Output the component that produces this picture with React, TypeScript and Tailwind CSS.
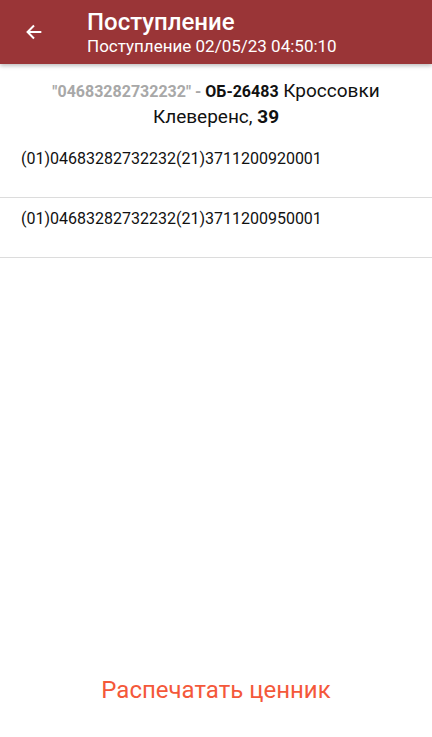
export default function App() {
  const codes = [
    "(01)04683282732232(21)3711200920001",
    "(01)04683282732232(21)3711200950001",
  ];

  return (
    <div className="flex h-[737px] w-[432px] flex-col bg-white font-['Roboto',sans-serif]">
      {/* шапка */}
      <header className="flex h-16 shrink-0 items-center bg-[#9a3537] shadow-[0_2px_4px_rgba(0,0,0,0.25)]">
        <button className="ml-[22px] flex h-6 w-6 items-center justify-center text-white">
          <svg width="22" height="22" viewBox="0 0 24 24" fill="none">
            <path d="M20 12H5M12 5l-7 7 7 7" stroke="currentColor" strokeWidth="2.2" />
          </svg>
        </button>
        <div className="ml-[41px] flex flex-col text-white">
          <span className="text-[24px] font-medium leading-[28px]">Поступление</span>
          <span className="text-[17px] leading-[21px]">Поступление 02/05/23 04:50:10</span>
        </div>
      </header>

      {/* товар */}
      <div className="px-4 pt-[14px] pb-[9px] text-center text-[19px] leading-[25px] text-[#111]">
        <span className="text-[16px] font-bold text-[#a8a8a8]">"04683282732232" - </span>
        <span className="text-[16px] font-bold">ОБ-26483</span> Кроссовки Клеверенс, <span className="font-bold">39</span>
      </div>

      {/* марки */}
      <div className="flex flex-col">
        {codes.map((code) => (
          <div key={code} className="h-[60px] border-b border-[#dcdcdc] px-[21px] pt-[11px] text-[16px] leading-5 text-[#111]">
            {code}
          </div>
        ))}
      </div>

      <div className="flex-1" />

      <button className="mb-[33px] self-center text-[24px] leading-7 text-[#f4583a]">Распечатать ценник</button>
    </div>
  );
}
